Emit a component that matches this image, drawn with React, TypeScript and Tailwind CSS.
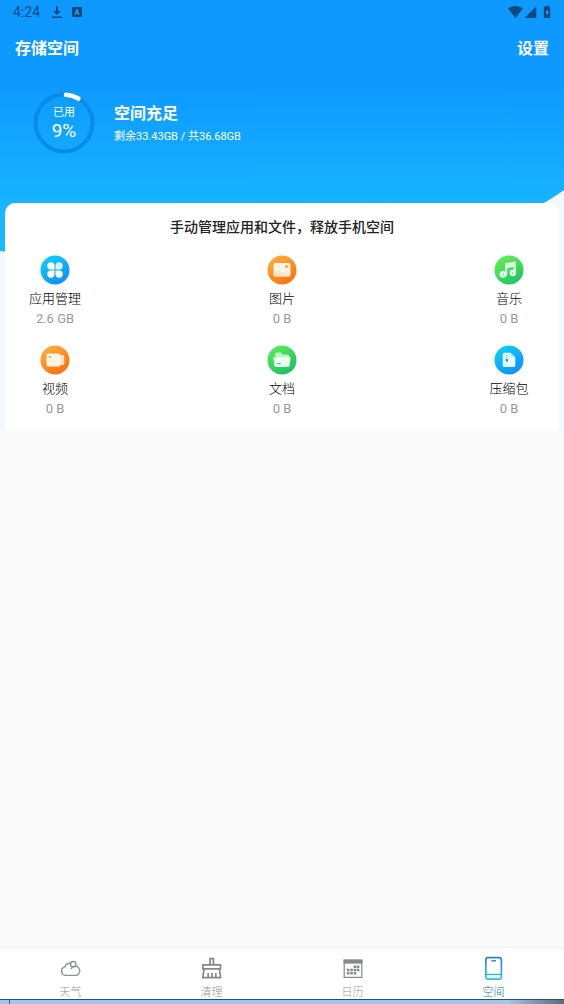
import type { ReactNode } from "react";
import { clsx } from "clsx";

type Category = {
  id: string;
  label: string;
  size: string;
  from: string;
  to: string;
  glyph: ReactNode;
};

const categories: Category[] = [
  {
    id: "apps",
    label: "应用管理",
    size: "2.6 GB",
    from: "#0fd0f5",
    to: "#108df8",
    glyph: (
      <g fill="#fff">
        <path d="M14.5 14.5h-3.6a3.6 3.6 0 1 1 3.6-3.6z" />
        <path d="M15.5 14.5v-3.6a3.6 3.6 0 1 1 3.6 3.6z" opacity="0.85" />
        <path d="M14.5 15.5v3.6a3.6 3.6 0 1 1-3.6-3.6z" />
        <path d="M15.5 15.5h3.6a3.6 3.6 0 1 1-3.6 3.6z" />
      </g>
    ),
  },
  {
    id: "pictures",
    label: "图片",
    size: "0 B",
    from: "#fbb03a",
    to: "#fb6d0c",
    glyph: (
      <>
        <rect x="6.5" y="8" width="17" height="13.5" rx="2" fill="#fff4e6" />
        <path d="M6.5 17.5l4.5-2 3.5 2 4.5-1 4.5-.5v3.5a2 2 0 0 1-2 2h-13a2 2 0 0 1-2-2z" fill="#ffe6cb" />
        <circle cx="19.5" cy="11.5" r="1.3" fill="#f5892a" />
      </>
    ),
  },
  {
    id: "music",
    label: "音乐",
    size: "0 B",
    from: "#68ee50",
    to: "#18c468",
    glyph: (
      <>
        <path d="M11 8.2l10.8-2v13h-2.3v-7.2l-6.2 1.2v7.4H11z" fill="#d9fbe0" />
        <circle cx="9" cy="19.3" r="3.4" fill="#effff0" />
        <circle cx="18.8" cy="18" r="3.2" fill="#effff0" />
        <circle cx="9.4" cy="19.3" r="0.7" fill="#43d55f" />
        <circle cx="18.8" cy="18" r="0.7" fill="#43d55f" />
      </>
    ),
  },
  {
    id: "video",
    label: "视频",
    size: "0 B",
    from: "#fbb03a",
    to: "#fb6d0c",
    glyph: (
      <>
        <path d="M19 11.5l2.6-1.5h1.6a1 1 0 0 1 1 1v8a1 1 0 0 1-1 1h-1.6L19 18.5z" fill="#ffe2c2" />
        <rect x="6.5" y="8.5" width="14" height="13" rx="1.6" fill="#fff4e6" />
        <circle cx="9.8" cy="11.8" r="0.9" fill="#e57a20" />
      </>
    ),
  },
  {
    id: "docs",
    label: "文档",
    size: "0 B",
    from: "#5ee95a",
    to: "#14c163",
    glyph: (
      <>
        <path d="M8 9.4a1.8 1.8 0 0 1 1.8-1.8h4l1.8 2h5.2a1.5 1.5 0 0 1 1.5 1.5v3H8z" fill="#b9f5c6" />
        <path d="M6.3 12.2h17.4l-1.2 8.5a1.5 1.5 0 0 1-1.5 1.3H9a1.5 1.5 0 0 1-1.5-1.3z" fill="#edfff1" />
        <path d="M10.3 18.6h3.4" stroke="#27bf69" strokeWidth="1.1" />
      </>
    ),
  },
  {
    id: "archives",
    label: "压缩包",
    size: "0 B",
    from: "#0fd0f5",
    to: "#108df8",
    glyph: (
      <>
        <path d="M8.7 9.2a1.5 1.5 0 0 1 1.5-1.5h6.3l4.8 4.5v8.2a1.5 1.5 0 0 1-1.5 1.5h-9.6a1.5 1.5 0 0 1-1.5-1.5z" fill="#e6f9ff" />
        <path d="M16.5 7.7l4.8 4.5h-3.6a1.2 1.2 0 0 1-1.2-1.2z" fill="#b5eafd" />
        <path d="M12.8 10.2v3.2" stroke="#239cd8" strokeWidth="1" strokeDasharray="1 0.7" />
        <rect x="11.8" y="14" width="2.1" height="2.6" rx="0.6" fill="#1587c8" />
      </>
    ),
  },
];

const tabs = [
  {
    id: "weather",
    label: "天气",
    icon: (
      <g stroke="#8d9094" strokeWidth="1.4" fill="none">
        <path d="M6.8 19.4a4.3 4.3 0 0 1-.8-8.5 5 5 0 0 1 9.4-.6 4.6 4.6 0 0 1 1.5 9.1z" />
        <circle cx="14.2" cy="8.2" r="2.7" fill="#fff" />
        <path d="M12.2 13.2a3.6 3.6 0 0 1 3.3-2.8" />
      </g>
    ),
  },
  {
    id: "clean",
    label: "清理",
    icon: (
      <g stroke="#85888c" strokeWidth="1.7" fill="none">
        <path d="M10 9V2.6h3.4V9" />
        <path d="M2.9 12.8V8.8h17.6v4z" />
        <path d="M4 13L2.8 21.6h17.8L19.4 13" />
        <path d="M8.2 21v-4M12 21v-4M15.8 21v-4" />
      </g>
    ),
  },
  {
    id: "calendar",
    label: "日历",
    icon: (
      <>
        <rect x="3.2" y="4.2" width="17.6" height="17.2" fill="none" stroke="#85888c" strokeWidth="1.2" />
        <path d="M2.6 3.6h18.8v4H2.6z" fill="#85888c" />
        <g fill="#85888c">
          <path d="M12.6 9.6h2.6v2.4h-2.6zM15.8 9.6h2.6v2.4h-2.6z" />
          <path d="M5.8 12.8h2.6v2.4H5.8zM9.2 12.8h2.6v2.4H9.2zM12.6 12.8h2.6v2.4h-2.6zM15.8 12.8h2.6v2.4h-2.6z" />
          <path d="M5.8 16h2.6v2.4H5.8zM9.2 16h2.6v2.4H9.2zM12.6 16h2.6v2.4h-2.6z" />
        </g>
      </>
    ),
  },
  {
    id: "space",
    label: "空间",
    icon: (
      <>
        <defs>
          <linearGradient id="phone" x1="0" y1="0" x2="0" y2="1">
            <stop offset="0" stopColor="#2b7fd0" />
            <stop offset="1" stopColor="#35c3e0" />
          </linearGradient>
        </defs>
        <path d="M4.5 18.4h14.6v3a1.5 1.5 0 0 1-1.5 1.5H6a1.5 1.5 0 0 1-1.5-1.5z" fill="#dff6fa" />
        <rect x="3.8" y="1.6" width="15.6" height="21.6" rx="2.2" fill="none" stroke="url(#phone)" strokeWidth="1.7" />
        <path d="M4 18.4h15.2" stroke="#2fb2dc" strokeWidth="1.2" />
        <path d="M9.4 4.8H14" stroke="#2b7fd0" strokeWidth="1.4" />
      </>
    ),
  },
];

function StatusBar() {
  return (
    <div className="flex h-6 items-center justify-between pl-[13px] pr-3 text-[#0a4a80]">
      <div className="flex items-center">
        <span className="w-[38px] text-sm leading-6">4:24</span>
        <svg viewBox="0 0 12 14" className="h-[14px] w-3" fill="currentColor">
          <path d="M5 1h2v5h3L6 10 2 6h3zM1 11.6h10V13H1z" />
        </svg>
        <svg viewBox="0 0 10 10" className="ml-[9px] h-[10px] w-[10px]">
          <rect width="10" height="10" rx="1" fill="currentColor" />
          <path d="M2.8 7.8L5 2.4l2.2 5.4M3.6 6.2h2.8" fill="none" stroke="#4db0f8" strokeWidth="1" />
        </svg>
      </div>
      <svg viewBox="0 0 44 14" className="h-[14px] w-11" fill="currentColor">
        <path d="M0 3.6C4 .2 11 .2 15 3.6L7.5 13z" />
        <path d="M28.3 1.2V13H16.8z" />
        <path d="M35.8 1.8h1.7V.8h3v1h1.7V13h-6.4z" />
        <path d="M39.6 4.2l-2 3.4h1.2v3l2-3.6h-1.2z" fill="#4db0f8" />
      </svg>
    </div>
  );
}

function UsageRing() {
  return (
    <div className="relative flex h-[62px] w-[62px] flex-col items-center justify-center text-white">
      <svg viewBox="0 0 62 62" className="absolute inset-0" fill="none" strokeWidth="4">
        <circle cx="31" cy="31" r="28.5" stroke="#078cec" />
        <path d="M33 2.8a28.5 28.5 0 0 1 12.4 3.8" stroke="#fff" strokeWidth="4.6" strokeLinecap="round" />
      </svg>
      <span className="relative text-[11px] leading-4">已用</span>
      <span className="relative text-[19px] leading-5">9%</span>
    </div>
  );
}

function CategoryButton({ item }: { item: Category }) {
  return (
    <button type="button" className="flex w-20 flex-col items-center">
      <svg viewBox="0 0 30 30" className="h-[30px] w-[30px]">
        <defs>
          <linearGradient id={item.id} x1="0.2" y1="0" x2="0.8" y2="1">
            <stop offset="0" stopColor={item.from} />
            <stop offset="1" stopColor={item.to} />
          </linearGradient>
        </defs>
        <circle cx="15" cy="15" r="14.5" fill={`url(#${item.id})`} />
        {item.glyph}
      </svg>
      <span className="mt-1 text-[13px] leading-5 font-light text-black">{item.label}</span>
      <span className="text-[13px] leading-5 text-[#999]">{item.size}</span>
    </button>
  );
}

export default function App() {
  return (
    <div className="flex min-h-screen flex-col bg-[#fafafa] font-[Roboto,'Noto_Sans_CJK_SC',sans-serif]">
      <div className="relative bg-[#f3f8ff]">
        {/* Blue backdrop with the slanted lower edge */}
        <svg viewBox="0 0 564 260" preserveAspectRatio="none" className="absolute top-0 left-0 h-[260px] w-full">
          <defs>
            <linearGradient id="sky" x1="0" y1="0" x2="0" y2="1">
              <stop offset="0.32" stopColor="#0d99ff" />
              <stop offset="0.78" stopColor="#18b4ff" />
              <stop offset="1" stopColor="#1cbcff" />
            </linearGradient>
          </defs>
          <path d="M0 0h564v190C510 229 420 256 300 259S60 258 0 251z" fill="url(#sky)" />
        </svg>

        <div className="relative">
          <StatusBar />
          <header className="flex h-[50px] items-center justify-between px-[15px] text-white">
            <h1 className="text-base font-bold">存储空间</h1>
            <button type="button" className="text-base font-bold">设置</button>
          </header>

          <section className="flex items-center gap-[19px] px-[33px] pt-[18px] pb-[49px] text-white">
            <UsageRing />
            <div className="pt-[3px]">
              <h2 className="text-base leading-6 font-bold">空间充足</h2>
              <p className="text-[11px] leading-[22px]">剩余33.43GB / 共36.68GB</p>
            </div>
          </section>

          <main className="mx-[5px] rounded-t-[10px] bg-white px-[10px] pt-3 pb-3">
            <h2 className="text-center text-sm leading-6 font-medium text-[#222]">
              手动管理应用和文件，释放手机空间
            </h2>
            <div className="mt-4 grid grid-cols-[80px_80px_80px] justify-between gap-y-4">
              {categories.map((item) => (
                <CategoryButton key={item.id} item={item} />
              ))}
            </div>
          </main>
        </div>
      </div>

      <nav className="mt-auto flex h-[52px] border-t border-[#f0f0f0] bg-white pt-2">
        {tabs.map((tab) => (
          <a
            key={tab.id}
            href={`#${tab.id}`}
            className={clsx(
              "flex flex-1 flex-col items-center text-[11px] font-light",
              tab.id === "space" ? "text-[#1670cc]" : "text-[#96989b]"
            )}
          >
            <svg viewBox="0 0 24 24" className="h-6 w-6 shrink-0">
              {tab.icon}
            </svg>
            <span className="mt-1 leading-[18px]">{tab.label}</span>
          </a>
        ))}
      </nav>

      {/* Edge of the desktop taskbar */}
      <div className="flex h-[5px] border-t border-[#2f4f70] bg-linear-to-r from-[#a3c6ea] from-90% to-[#5c6b7c]">
        <div className="w-[10px] border-r border-[#3a5f88]" />
      </div>
    </div>
  );
}
